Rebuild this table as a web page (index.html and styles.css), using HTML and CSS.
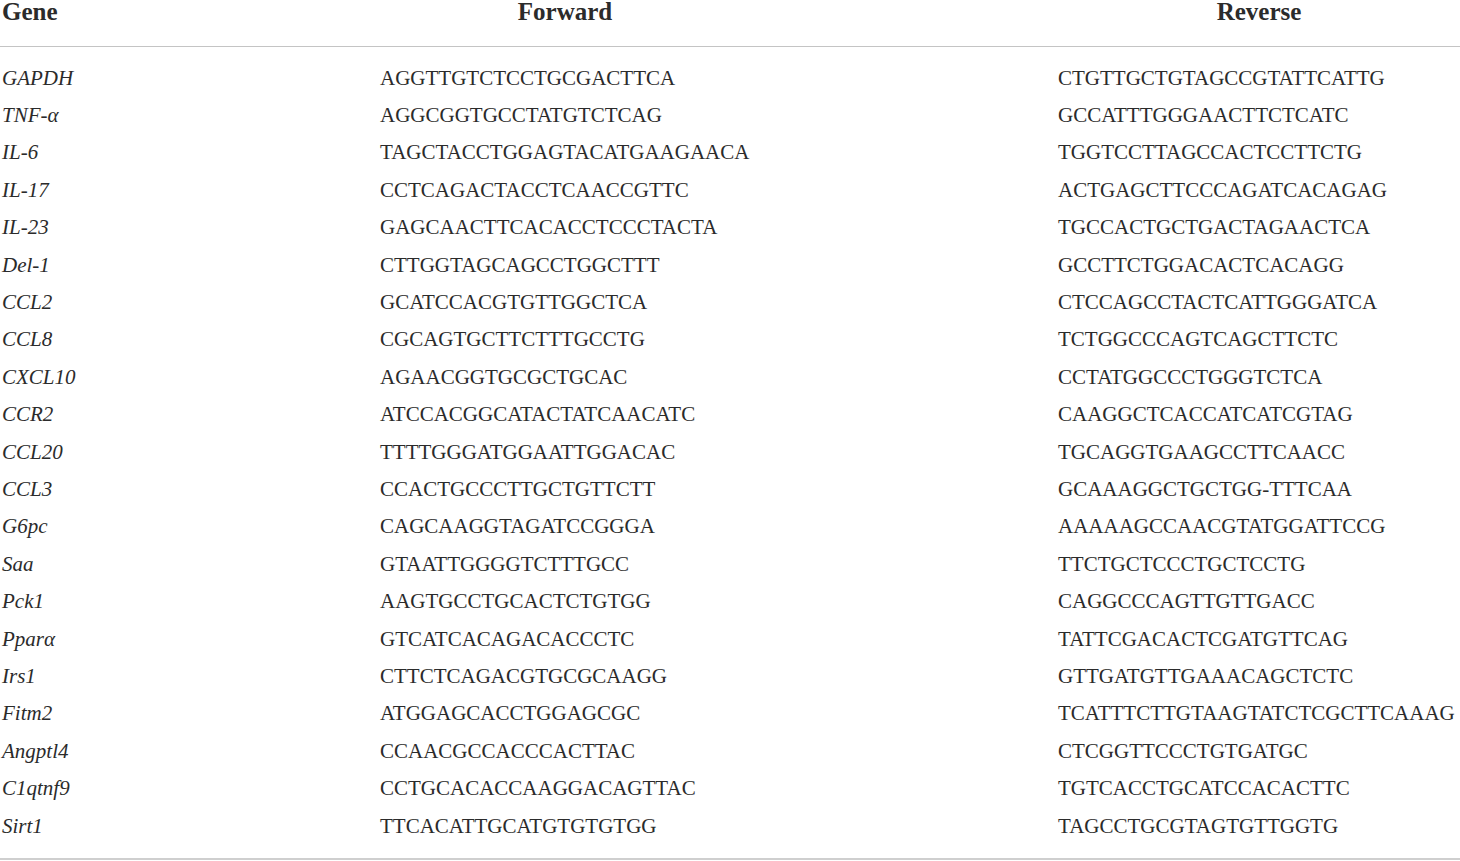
FILE: index.html
```html
<!DOCTYPE html>
<html>
<head>
<meta charset="utf-8">
<link rel="stylesheet" href="styles.css">
</head>
<body>
<div class="table">
  <div class="head">
    <div class="h gene">Gene</div>
    <div class="h fwd">Forward</div>
    <div class="h rev">Reverse</div>
  </div>
  <div class="body">
    <div class="row"><div class="g">GAPDH</div><div>AGGTTGTCTCCTGCGACTTCA</div><div>CTGTTGCTGTAGCCGTATTCATTG</div></div>
    <div class="row"><div class="g">TNF-α</div><div>AGGCGGTGCCTATGTCTCAG</div><div>GCCATTTGGGAACTTCTCATC</div></div>
    <div class="row"><div class="g">IL-6</div><div>TAGCTACCTGGAGTACATGAAGAACA</div><div>TGGTCCTTAGCCACTCCTTCTG</div></div>
    <div class="row"><div class="g">IL-17</div><div>CCTCAGACTACCTCAACCGTTC</div><div>ACTGAGCTTCCCAGATCACAGAG</div></div>
    <div class="row"><div class="g">IL-23</div><div>GAGCAACTTCACACCTCCCTACTA</div><div>TGCCACTGCTGACTAGAACTCA</div></div>
    <div class="row"><div class="g">Del-1</div><div>CTTGGTAGCAGCCTGGCTTT</div><div>GCCTTCTGGACACTCACAGG</div></div>
    <div class="row"><div class="g">CCL2</div><div>GCATCCACGTGTTGGCTCA</div><div>CTCCAGCCTACTCATTGGGATCA</div></div>
    <div class="row"><div class="g">CCL8</div><div>CGCAGTGCTTCTTTGCCTG</div><div>TCTGGCCCAGTCAGCTTCTC</div></div>
    <div class="row"><div class="g">CXCL10</div><div>AGAACGGTGCGCTGCAC</div><div>CCTATGGCCCTGGGTCTCA</div></div>
    <div class="row"><div class="g">CCR2</div><div>ATCCACGGCATACTATCAACATC</div><div>CAAGGCTCACCATCATCGTAG</div></div>
    <div class="row"><div class="g">CCL20</div><div>TTTTGGGATGGAATTGGACAC</div><div>TGCAGGTGAAGCCTTCAACC</div></div>
    <div class="row"><div class="g">CCL3</div><div>CCACTGCCCTTGCTGTTCTT</div><div>GCAAAGGCTGCTGG-TTTCAA</div></div>
    <div class="row"><div class="g">G6pc</div><div>CAGCAAGGTAGATCCGGGA</div><div>AAAAAGCCAACGTATGGATTCCG</div></div>
    <div class="row"><div class="g">Saa</div><div>GTAATTGGGGTCTTTGCC</div><div>TTCTGCTCCCTGCTCCTG</div></div>
    <div class="row"><div class="g">Pck1</div><div>AAGTGCCTGCACTCTGTGG</div><div>CAGGCCCAGTTGTTGACC</div></div>
    <div class="row"><div class="g">Pparα</div><div>GTCATCACAGACACCCTC</div><div>TATTCGACACTCGATGTTCAG</div></div>
    <div class="row"><div class="g">Irs1</div><div>CTTCTCAGACGTGCGCAAGG</div><div>GTTGATGTTGAAACAGCTCTC</div></div>
    <div class="row"><div class="g">Fitm2</div><div>ATGGAGCACCTGGAGCGC</div><div>TCATTTCTTGTAAGTATCTCGCTTCAAAG</div></div>
    <div class="row"><div class="g">Angptl4</div><div>CCAACGCCACCCACTTAC</div><div>CTCGGTTCCCTGTGATGC</div></div>
    <div class="row"><div class="g">C1qtnf9</div><div>CCTGCACACCAAGGACAGTTAC</div><div>TGTCACCTGCATCCACACTTC</div></div>
    <div class="row"><div class="g">Sirt1</div><div>TTCACATTGCATGTGTGTGG</div><div>TAGCCTGCGTAGTGTTGGTG</div></div>
  </div>
</div>
</body>
</html>
```
FILE: styles.css
```css
html, body {
  margin: 0;
  padding: 0;
  background: #ffffff;
}
body {
  font-family: "Liberation Serif", "Times New Roman", serif;
  color: #2b2b2b;
  width: 1460px;
  overflow: hidden;
}
.table {
  width: 1460px;
  border-bottom: 2px solid #cfcfcf;
  padding-bottom: 14px;
}
.head {
  display: grid;
  grid-template-columns: 380px 678px 1fr;
  height: 46px;
  border-bottom: 1px solid #c4c4c4;
  font-weight: bold;
  font-size: 25px;
  line-height: 24px;
}
.gene { padding-left: 2px; }
.fwd { text-align: center; padding-right: 308px; }
.rev { text-align: center; }
.body { padding-top: 12px; }
.row {
  display: grid;
  grid-template-columns: 380px 678px 1fr;
  height: 37.4px;
  align-items: center;
  font-size: 21px;
  line-height: 24px;
}
.row > div:first-child { padding-left: 2px; }
.g { font-style: italic; }
```
